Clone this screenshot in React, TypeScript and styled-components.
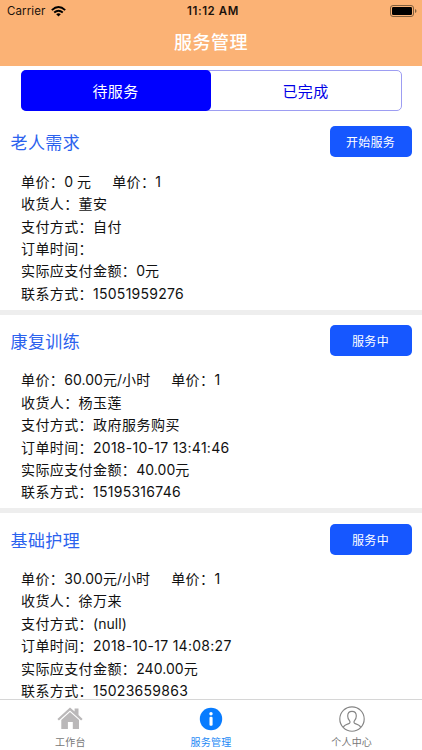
import React from 'react';
import styled, { createGlobalStyle } from 'styled-components';

const Global = createGlobalStyle`
  * { box-sizing: border-box; }
  body { margin: 0; background: #fff; font-family: Inter, "Noto Sans CJK SC", sans-serif; color: #111; }
  button { font: inherit; border: 0; margin: 0; padding: 0; }
`;

const Screen = styled.div`
  width: 422px;
  height: 750px;
  display: flex;
  flex-direction: column;
  overflow: hidden;
  background: #fff;
`;

const Header = styled.header`
  flex: none;
  height: 66px;
  background: #fbb275;
`;

const StatusBar = styled.div`
  display: grid;
  grid-template-columns: 1fr auto 1fr;
  align-items: center;
  height: 22px;
  padding: 0 5px 0 7px;
  font-size: 11.5px;
  line-height: 22px;
  color: #1b130c;
`;

const Carrier = styled.div`
  display: flex;
  align-items: center;
  gap: 6px;
  letter-spacing: 0.1px;
`;

const Clock = styled.div`
  padding-left: 2px;
  font-weight: 600;
  letter-spacing: 0.6px;
`;

const Battery = styled.div`
  display: flex;
  justify-content: flex-end;
`;

const Title = styled.h1`
  margin: 0;
  text-align: center;
  font-size: 18px;
  font-weight: 500;
  line-height: 42px;
  letter-spacing: 0.5px;
  color: #fff;
`;

const Segments = styled.div`
  flex: none;
  display: flex;
  width: 381px;
  height: 41px;
  margin: 4px 0 0 20.5px;
  border: 1px solid #9d9df2;
  border-radius: 5px;
`;

const Segment = styled.button<{ $active?: boolean }>`
  flex: 1;
  margin: ${p => (p.$active ? '-1px 0 -1px -1px' : '0')};
  border-radius: 5px;
  font-size: 15px;
  letter-spacing: 0.3px;
  color: ${p => (p.$active ? '#fff' : '#0000e6')};
  background: ${p => (p.$active ? '#0000ff' : 'transparent')};
`;

const List = styled.main`
  flex: 1;
  min-height: 0;
  padding-top: 5.2px;
  overflow: hidden;
`;

const Card = styled.section`
  height: 198.6px;
  border-bottom: 5.2px solid #eee;
`;

const CardHead = styled.div`
  display: flex;
  align-items: center;
  justify-content: space-between;
  height: 51.4px;
  padding: 0 10.5px;
`;

const CardTitle = styled.h2`
  margin: 0;
  font-size: 17px;
  font-weight: 400;
  letter-spacing: 0.4px;
  color: #2b62ee;
`;

const Action = styled.button`
  width: 82px;
  height: 31px;
  border-radius: 5px;
  background: #1657ff;
  color: #fff;
  font-size: 12px;
  letter-spacing: 0.3px;
`;

const Details = styled.div`
  padding: 3.3px 21px 0;
`;

const Line = styled.div`
  display: flex;
  height: 22.4px;
  line-height: 22.4px;
  font-size: 14px;
  letter-spacing: 0.4px;
  white-space: pre;
`;

const Value = styled.span<{ $gap?: number; $spacing?: number }>`
  letter-spacing: ${p => p.$spacing ?? 0.05}px;
  margin-right: ${p => p.$gap ?? 0}px;
`;

const TabBar = styled.nav`
  flex: none;
  display: grid;
  grid-template-columns: repeat(3, 1fr);
  height: 51px;
  border-top: 1px solid #d6d6d6;
  background: #fff;
`;

const Tab = styled.div<{ $active?: boolean }>`
  display: flex;
  flex-direction: column;
  align-items: center;
  padding-top: 6px;
  font-size: 10px;
  line-height: 14px;
  letter-spacing: 0.2px;
  color: ${p => (p.$active ? '#2389f5' : '#777')};
  svg { height: 26px; margin-bottom: 3px; }
`;

interface Order {
  title: string;
  action: string;
  price: string;
  rows: [string, string][];
}

const orders: Order[] = [
  {
    title: '老人需求', action: '开始服务', price: '0 元',
    rows: [['收货人：', '董安'], ['支付方式：', '自付'], ['订单时间：', ''], ['实际应支付金额：', '0元'], ['联系方式：', '15051959276']],
  },
  {
    title: '康复训练', action: '服务中', price: '60.00元/小时',
    rows: [['收货人：', '杨玉莲'], ['支付方式：', '政府服务购买'], ['订单时间：', '2018-10-17 13:41:46'], ['实际应支付金额：', '40.00元'], ['联系方式：', '15195316746']],
  },
  {
    title: '基础护理', action: '服务中', price: '30.00元/小时',
    rows: [['收货人：', '徐万来'], ['支付方式：', '(null)'], ['订单时间：', '2018-10-17 14:08:27'], ['实际应支付金额：', '240.00元'], ['联系方式：', '15023659863']],
  },
];

// Chinese text is tracked widest, long digit runs a little, mixed amounts barely.
const spacingFor = (text: string) => {
  if (/^[\u4e00-\u9fff]+$/.test(text)) return 0.5;
  if (/^[\d\s:-]+$/.test(text)) return 0.27;
  return 0.05;
};

const WifiIcon = () => (
  <svg width="15" height="11" viewBox="0 0 15 11" fill="none" stroke="#000" strokeWidth="1.9">
    <path d="M.8 4.1Q7.5-1.9 14.2 4.1" />
    <path d="M3.2 6.5Q7.5 2.8 11.8 6.5" />
    <path d="M5.2 8.2Q7.5 6.2 9.8 8.2L7.5 10.5Z" fill="#000" stroke="none" />
  </svg>
);

const BatteryIcon = () => (
  <svg width="27" height="12" viewBox="0 0 27 12">
    <rect x=".5" y=".5" width="23" height="11" rx="2.5" fill="none" stroke="#80603f" />
    <rect x="2" y="2" width="20" height="8" rx="1.2" />
    <path d="M25 4q1.5.6 1.5 2T25 8Z" fill="#80603f" />
  </svg>
);

const HomeIcon = () => (
  <svg width="26" height="26" viewBox="0 0 26 26" fill="#bab8b9">
    <path d="M13 1.4 17.6 5.5V2.6h3.9v6.5l4.1 3.8-1.5 1.7L13 4.5 1.9 14.6.4 12.9Z" />
    <path d="M13 5.9 22 14.1V23H15.8v-7h-4.9v7H4.3V14.1Z" />
  </svg>
);

const InfoIcon = () => (
  <svg width="26" height="26" viewBox="0 0 26 26">
    <circle cx="13" cy="13" r="11.2" fill="#087cff" />
    <circle cx="13" cy="7.7" r="1.7" fill="#fff" />
    <rect x="11.5" y="10.8" width="3.1" height="9" rx="1.1" fill="#fff" />
  </svg>
);

const PersonIcon = () => (
  <svg width="26" height="26" viewBox="0 0 26 26" fill="none" stroke="#858585" strokeWidth="1.15">
    <circle cx="13" cy="13" r="12.2" />
    <path d="M4.3 21.3c.5-2 3.1-2.9 5.5-3.7 1.4-.5 1.5-1.7.8-2.7C9.3 13.5 8.7 12.1 8.7 10c0-3 1.6-4.7 4.3-4.7s4.3 1.7 4.3 4.7c0 2.1-.6 3.5-1.9 4.9-.7 1-.6 2.2.8 2.7 2.4.8 5 1.7 5.5 3.7" />
  </svg>
);

export default function App() {
  return (
    <Screen>
      <Global />
      <Header>
        <StatusBar>
          <Carrier>Carrier<WifiIcon /></Carrier>
          <Clock>11:12 AM</Clock>
          <Battery><BatteryIcon /></Battery>
        </StatusBar>
        <Title>服务管理</Title>
      </Header>
      <Segments>
        <Segment $active>待服务</Segment>
        <Segment>已完成</Segment>
      </Segments>
      <List>
        {orders.map(o => (
          <Card key={o.title}>
            <CardHead>
              <CardTitle>{o.title}</CardTitle>
              <Action>{o.action}</Action>
            </CardHead>
            <Details>
              <Line>单价：<Value $gap={21}>{o.price}</Value>单价：<Value>1</Value></Line>
              {o.rows.map(([label, value]) => (
                <Line key={label}>{label}<Value $spacing={spacingFor(value)}>{value}</Value></Line>
              ))}
            </Details>
          </Card>
        ))}
      </List>
      <TabBar>
        <Tab><HomeIcon />工作台</Tab>
        <Tab $active><InfoIcon />服务管理</Tab>
        <Tab><PersonIcon />个人中心</Tab>
      </TabBar>
    </Screen>
  );
}
